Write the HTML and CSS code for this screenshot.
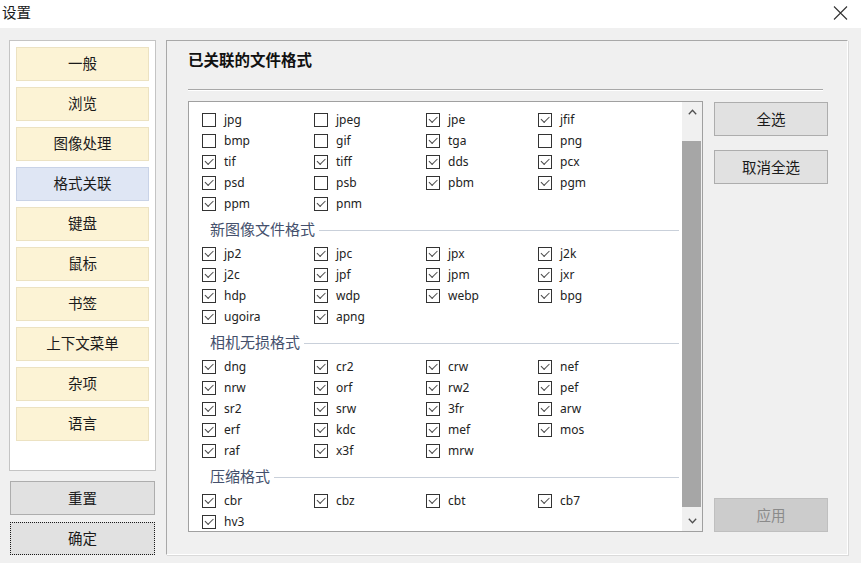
FILE: index.html
```html
<!DOCTYPE html>
<html lang="zh-CN">
<head>
<meta charset="utf-8">
<title>设置</title>
<link rel="stylesheet" href="styles.css">
</head>
<body>
<div class="titlebar">
  <span class="title">设置</span>
  <svg class="close" width="15" height="16" viewBox="0 0 15 16"><path d="M1 1.5 L14 14.5 M14 1.5 L1 14.5" stroke="#333" stroke-width="1.1" fill="none"/></svg>
</div>
<div class="main">
  <div class="left">
    <div class="nav">
      <div class="nav-item">一般</div>
      <div class="nav-item">浏览</div>
      <div class="nav-item">图像处理</div>
      <div class="nav-item active">格式关联</div>
      <div class="nav-item">键盘</div>
      <div class="nav-item">鼠标</div>
      <div class="nav-item">书签</div>
      <div class="nav-item">上下文菜单</div>
      <div class="nav-item">杂项</div>
      <div class="nav-item">语言</div>
    </div>
    <div class="btn btn-left">重置</div>
    <div class="btn btn-left btn-focus">确定</div>
  </div>
  <div class="panel">
    <div class="panel-title">已关联的文件格式</div>
    <div class="sep"></div>
    <div class="content">
      <div class="listbox">
        <div class="list">
          <div class="grid">
            <div class="item"><span class="cb"></span>jpg</div>
            <div class="item"><span class="cb"></span>jpeg</div>
            <div class="item"><span class="cb on"></span>jpe</div>
            <div class="item"><span class="cb on"></span>jfif</div>
            <div class="item"><span class="cb"></span>bmp</div>
            <div class="item"><span class="cb"></span>gif</div>
            <div class="item"><span class="cb on"></span>tga</div>
            <div class="item"><span class="cb"></span>png</div>
            <div class="item"><span class="cb on"></span>tif</div>
            <div class="item"><span class="cb on"></span>tiff</div>
            <div class="item"><span class="cb on"></span>dds</div>
            <div class="item"><span class="cb on"></span>pcx</div>
            <div class="item"><span class="cb on"></span>psd</div>
            <div class="item"><span class="cb"></span>psb</div>
            <div class="item"><span class="cb on"></span>pbm</div>
            <div class="item"><span class="cb on"></span>pgm</div>
            <div class="item"><span class="cb on"></span>ppm</div>
            <div class="item"><span class="cb on"></span>pnm</div>
          </div>
          <div class="ghead"><span>新图像文件格式</span></div>
          <div class="grid">
            <div class="item"><span class="cb on"></span>jp2</div>
            <div class="item"><span class="cb on"></span>jpc</div>
            <div class="item"><span class="cb on"></span>jpx</div>
            <div class="item"><span class="cb on"></span>j2k</div>
            <div class="item"><span class="cb on"></span>j2c</div>
            <div class="item"><span class="cb on"></span>jpf</div>
            <div class="item"><span class="cb on"></span>jpm</div>
            <div class="item"><span class="cb on"></span>jxr</div>
            <div class="item"><span class="cb on"></span>hdp</div>
            <div class="item"><span class="cb on"></span>wdp</div>
            <div class="item"><span class="cb on"></span>webp</div>
            <div class="item"><span class="cb on"></span>bpg</div>
            <div class="item"><span class="cb on"></span>ugoira</div>
            <div class="item"><span class="cb on"></span>apng</div>
          </div>
          <div class="ghead"><span>相机无损格式</span></div>
          <div class="grid">
            <div class="item"><span class="cb on"></span>dng</div>
            <div class="item"><span class="cb on"></span>cr2</div>
            <div class="item"><span class="cb on"></span>crw</div>
            <div class="item"><span class="cb on"></span>nef</div>
            <div class="item"><span class="cb on"></span>nrw</div>
            <div class="item"><span class="cb on"></span>orf</div>
            <div class="item"><span class="cb on"></span>rw2</div>
            <div class="item"><span class="cb on"></span>pef</div>
            <div class="item"><span class="cb on"></span>sr2</div>
            <div class="item"><span class="cb on"></span>srw</div>
            <div class="item"><span class="cb on"></span>3fr</div>
            <div class="item"><span class="cb on"></span>arw</div>
            <div class="item"><span class="cb on"></span>erf</div>
            <div class="item"><span class="cb on"></span>kdc</div>
            <div class="item"><span class="cb on"></span>mef</div>
            <div class="item"><span class="cb on"></span>mos</div>
            <div class="item"><span class="cb on"></span>raf</div>
            <div class="item"><span class="cb on"></span>x3f</div>
            <div class="item"><span class="cb on"></span>mrw</div>
          </div>
          <div class="ghead"><span>压缩格式</span></div>
          <div class="grid">
            <div class="item"><span class="cb on"></span>cbr</div>
            <div class="item"><span class="cb on"></span>cbz</div>
            <div class="item"><span class="cb on"></span>cbt</div>
            <div class="item"><span class="cb on"></span>cb7</div>
            <div class="item"><span class="cb on"></span>hv3</div>
          </div>
        </div>
        <div class="scrollbar">
          <div class="sb-btn"><svg width="9" height="6" viewBox="0 0 9 6"><polyline points="0.8,5.2 4.5,1.3 8.2,5.2" fill="none" stroke="#505050" stroke-width="1.3"/></svg></div>
          <div class="sb-track"><div class="sb-thumb"></div></div>
          <div class="sb-btn"><svg width="9" height="6" viewBox="0 0 9 6"><polyline points="0.8,0.8 4.5,4.7 8.2,0.8" fill="none" stroke="#505050" stroke-width="1.3"/></svg></div>
        </div>
      </div>
      <div class="actions">
        <div class="btn btn-right">全选</div>
        <div class="btn btn-right btn-gap">取消全选</div>
        <div class="btn btn-right btn-disabled">应用</div>
      </div>
    </div>
  </div>
</div>
</body>
</html>
```
FILE: styles.css
```css
html, body {
  margin: 0;
  padding: 0;
}
body {
  width: 861px;
  height: 563px;
  overflow: hidden;
  background: #f0f0f0;
  color: #1a1a1a;
  font-family: "Noto Sans CJK SC", "Noto Sans", sans-serif;
}
.titlebar {
  height: 28px;
  background: #fff;
  display: flex;
  justify-content: space-between;
  align-items: flex-start;
  padding: 0 13px 0 2px;
}
.title {
  font-size: 14.5px;
  line-height: 24px;
}
.close {
  margin-top: 5px;
}
.main {
  display: flex;
  padding: 12px 0 0 9px;
}
.left {
  width: 147px;
  display: flex;
  flex-direction: column;
}
.nav {
  height: 431px;
  box-sizing: border-box;
  background: #fff;
  border: 1px solid #c4c4c4;
  padding: 6px;
  display: flex;
  flex-direction: column;
  gap: 6px;
}
.nav-item {
  height: 34px;
  box-sizing: border-box;
  border: 1px solid #ece2c2;
  background: #fcf3d5;
  display: flex;
  align-items: center;
  justify-content: center;
  font-size: 14.5px;
  padding-bottom: 3px;
}
.nav-item.active {
  background: #dfe6f4;
  border-color: #c9d3e7;
}
.btn {
  height: 34px;
  box-sizing: border-box;
  border: 1px solid #adadad;
  background: #e1e1e1;
  display: flex;
  align-items: center;
  justify-content: center;
  font-size: 14.5px;
  padding-bottom: 2px;
}
.btn-left {
  margin: 10px 1px 0;
}
.btn-left + .btn-left {
  margin-top: 7px;
  height: 33px;
}
.btn-focus {
  border: 1px dotted #1a1a1a;
}
.panel {
  margin-left: 10px;
  width: 682px;
  height: 515px;
  box-sizing: border-box;
  border: 1px solid;
  border-color: #a8a8a8 #fff #fff #a8a8a8;
  box-shadow: 1px 1px 0 #dadada;
  padding-left: 21px;
}
.panel-title {
  margin-top: 8px;
  padding-bottom: 1px;
  font-size: 15.5px;
  font-weight: bold;
  line-height: 20px;
  color: #111;
}
.sep {
  margin-top: 19px;
  width: 635px;
  border-top: 1px solid #a8a8a8;
  border-bottom: 1px solid #fff;
}
.content {
  margin-top: 10px;
  display: flex;
  gap: 11px;
}
.listbox {
  width: 515px;
  height: 431px;
  box-sizing: border-box;
  border: 1px solid #a0a0a0;
  background: #fff;
  display: flex;
  overflow: hidden;
}
.list {
  flex: 1;
  padding: 7px 3px 0 13px;
  overflow: hidden;
  font-family: "Noto Sans", "Noto Sans CJK SC", sans-serif;
  font-size: 12px;
  color: #222;
}
.grid {
  display: grid;
  grid-template-columns: repeat(4, 112px);
  grid-auto-rows: 21px;
}
.item {
  display: flex;
  align-items: center;
}
.cb {
  position: relative;
  width: 14px;
  height: 14px;
  box-sizing: border-box;
  border: 1px solid #333;
  background: #fff;
  margin-right: 8px;
  flex: none;
}
.cb.on::after {
  content: "";
  position: absolute;
  left: 2px;
  top: 2.5px;
  width: 7px;
  height: 3.5px;
  border-left: 1.2px solid #4a4a4a;
  border-bottom: 1.2px solid #4a4a4a;
  transform: rotate(-45deg);
}
.ghead {
  height: 29px;
  box-sizing: border-box;
  padding: 3px 0 0 8px;
  display: flex;
  align-items: center;
  font-family: "Noto Sans CJK SC", sans-serif;
  font-size: 15px;
  color: #44506c;
}
.ghead span {
  margin-bottom: 3px;
}
.ghead::after {
  content: "";
  flex: 1;
  height: 1px;
  margin-left: 4px;
  background: #c9d0da;
}
.scrollbar {
  width: 20px;
  background: #f0f0f0;
  display: flex;
  flex-direction: column;
}
.sb-btn {
  height: 20px;
  display: flex;
  align-items: center;
  justify-content: center;
}
.sb-track {
  flex: 1;
  padding: 19px 1px 4px 0;
  display: flex;
}
.sb-thumb {
  flex: 1;
  background: #a6a6a6;
}
.actions {
  width: 114px;
  display: flex;
  flex-direction: column;
  height: 431px;
}
.btn-right {
  margin-top: 1px;
}
.btn-gap {
  margin-top: 14px;
}
.btn-disabled {
  margin-top: auto;
  background: #cccccc;
  border-color: #bfbfbf;
  color: #8a8a8a;
}
```
